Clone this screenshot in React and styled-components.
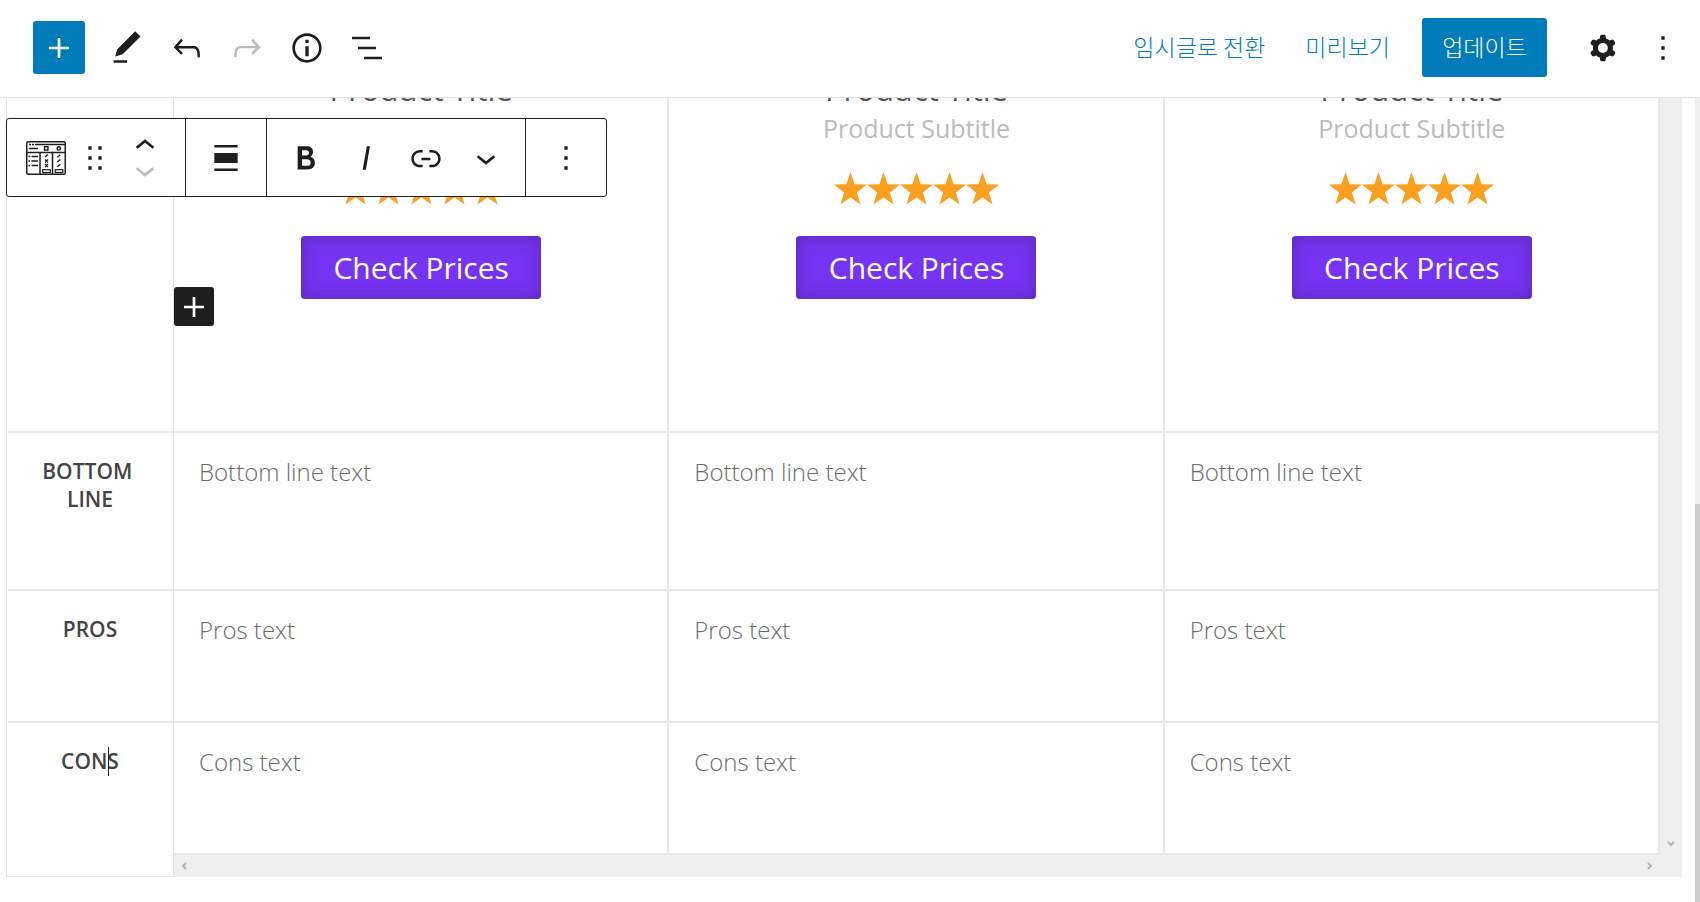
import React from "react";
import styled, { createGlobalStyle } from "styled-components";

const GlobalStyle = createGlobalStyle`
  *, *::before, *::after {
    box-sizing: border-box;
  }

  body {
    margin: 0;
    background: #fff;
    color: #1e1e1e;
    font-family: "Open Sans", "Noto Sans CJK KR", sans-serif;
  }

  button {
    font: inherit;
    color: inherit;
    border: 0;
    padding: 0;
    background: none;
    cursor: pointer;
  }

  svg {
    flex: none;
  }
`;

const Editor = styled.div`
  height: 100vh;
  display: flex;
  flex-direction: column;
  overflow: hidden;
`;

const Header = styled.header`
  flex: none;
  height: 98px;
  padding: 0 7px 2px 33px;
  display: flex;
  align-items: center;
  justify-content: space-between;
  background: #fff;
  border-bottom: 1px solid #e0e0e0;
`;

const HeaderGroup = styled.div`
  display: flex;
  align-items: center;
`;

const InserterButton = styled.button`
  width: 52px;
  height: 53px;
  margin-right: 12px;
  display: flex;
  align-items: center;
  justify-content: center;
  border-radius: 3px;
  background: #007cba;
  color: #fff;
`;

const IconButton = styled.button`
  width: ${(props) => props.$width || 60}px;
  height: 59px;
  display: flex;
  align-items: center;
  justify-content: center;

  &:disabled {
    color: #bbb;
    cursor: default;
  }
`;

const TextButton = styled.button`
  height: 59px;
  margin-right: 40px;
  padding-bottom: 3px;
  font-family: "Noto Sans CJK KR", sans-serif;
  font-size: 23px;
  font-weight: 300;
  color: #007cba;
`;

const UpdateButton = styled(TextButton)`
  width: 125px;
  margin: 0 26px 0 -8px;
  border-radius: 3px;
  background: #007cba;
  color: #fff;
`;

const Canvas = styled.main`
  position: relative;
  flex: 1;
  min-height: 0;
  display: flex;
  overflow: hidden;
`;

const Block = styled.div`
  flex: 1;
  min-width: 0;
  align-self: flex-start;
  display: flex;
  /* canvas is scrolled past the top of the block */
  margin: -40px 13px 0 6px;
`;

const BlockBody = styled.div`
  flex: 1;
  min-width: 0;
`;

const Table = styled.table`
  width: 100%;
  table-layout: fixed;
  border-collapse: separate;
  border-spacing: 0;
`;

const LabelCell = styled.th`
  width: 168px;
  height: ${(props) => props.$height}px;
  padding: 24px 30px 0;
  vertical-align: top;
  border: 1px solid #e2e2e2;
  border-width: 0 1px 0 1px;
  background: linear-gradient(#e8e8e8, #e8e8e8) right bottom / calc(100% - 1px) 2px no-repeat;
  font-size: 21px;
  line-height: 28px;
  font-weight: 600;
  text-transform: uppercase;
  white-space: break-spaces;
  color: #444;

  tr:last-child > & {
    background: none;
  }
`;

const TextCell = styled.td`
  padding: 22px 24px 0 25px;
  vertical-align: top;
  border-right: 2px solid #e8e8e8;
  border-bottom: 2px solid #e8e8e8;
  font-size: 24px;
  line-height: 33px;
  font-weight: 300;
  color: #6b6b6b;
`;

const ProductCell = styled.td`
  position: relative;
  padding: 12px 24px 0 25px;
  vertical-align: top;
  text-align: center;
  border-right: 2px solid #e8e8e8;
  border-bottom: 2px solid #e8e8e8;
`;

const ProductTitle = styled.h3`
  margin: 0 0 4px;
  font-size: 31px;
  line-height: 38px;
  font-weight: 500;
  color: #555;
`;

const ProductSubtitle = styled.p`
  margin: 0;
  font-size: 25px;
  line-height: 33px;
  font-weight: 400;
  color: #bbb;
`;

const Stars = styled.div`
  display: flex;
  justify-content: center;
  margin: 27px 0 31px;
  color: #f9a021;
`;

const PriceButton = styled.button`
  width: 240px;
  height: 63px;
  border-radius: 4px;
  background: #7633f1;
  box-shadow: inset 0 0 15px rgba(60, 30, 110, 0.5);
  color: #fff;
  font-size: 30px;
`;

const CellInserter = styled.button`
  position: absolute;
  left: 0;
  bottom: 105px;
  width: 40px;
  height: 39px;
  display: flex;
  align-items: center;
  justify-content: center;
  border-radius: 3px;
  background: #1e1e1e;
  color: #fff;
`;

const EditableLabel = styled.span`
  position: relative;
`;

const Caret = styled.span`
  position: absolute;
  top: 0;
  right: 10px;
  width: 1px;
  height: 29px;
  background: #1e1e1e;
`;

const BlockFooter = styled.div`
  display: flex;
  height: 22px;
`;

const FooterCorner = styled.div`
  flex: none;
  width: 168px;
  border: 1px solid #e2e2e2;
  border-top: 0;
`;

const HorizontalScroll = styled.div`
  flex: 1;
  display: flex;
  align-items: center;
  justify-content: space-between;
  padding: 0 5px;
  background: #efefef;
  color: #b0b0b0;
`;

const VerticalScroll = styled.div`
  flex: none;
  width: 22px;
  display: flex;
  align-items: flex-end;
  justify-content: center;
  padding-bottom: 28px;
  background: #efefef;
  color: #b0b0b0;
`;

const PageScroll = styled.div`
  flex: none;
  width: 5px;
  background: #efefef;
  display: flex;
  align-items: flex-end;
`;

const PageThumb = styled.div`
  width: 100%;
  height: 398px;
  background: #cdcdcd;
`;

const Toolbar = styled.div`
  position: absolute;
  left: 6px;
  top: 20px;
  height: 79px;
  display: flex;
  border: 1px solid #1e1e1e;
  border-radius: 3px;
  background: #fff;
`;

const ToolbarGroup = styled.div`
  display: flex;
  align-items: center;
  padding: 0 ${(props) => props.$pad || 0}px;

  & + & {
    border-left: 1px solid #1e1e1e;
  }
`;

const Movers = styled.div`
  display: flex;
  flex-direction: column;
  margin: 0 10px;
`;

const MoverButton = styled.button`
  width: 60px;
  height: 24px;
  display: flex;
  align-items: center;
  justify-content: center;
  overflow: hidden;

  &:disabled {
    color: #bbb;
  }
`;

const paths = {
  plus: "M18 11.2h-5.2V6h-1.6v5.2H6v1.6h5.2V18h1.6v-5.2H18z",
  edit: "M20.1 5.1L16.9 2 6.2 12.7l-1.3 4.4 4.5-1.3L20.1 5.1zM4 20.8h8v-1.5H4v1.5z",
  undo: "M18.3 11.7c-.6-.6-1.4-.9-2.3-.9H6.7l2.9-3.3-1.1-1-4.5 5L8.5 16l1-1-2.7-2.7H16c.5 0 .9.2 1.3.5 1 1 1 3.4 1 4.5v.3h1.5v-.2c0-1.5 0-4.3-1.5-5.7z",
  redo: "M15.6 6.5l-1.1 1 2.9 3.3H8c-.9 0-1.7.3-2.3.9-1.4 1.5-1.4 4.2-1.4 5.6v.2h1.5v-.3c0-1.1 0-3.5 1-4.5.3-.3.7-.5 1.3-.5h9.2L14.5 15l1.1 1.1 4.6-4.6-4.6-5z",
  info: "M12 3.2c-4.8 0-8.8 3.9-8.8 8.8 0 4.8 3.9 8.8 8.8 8.8 4.8 0 8.8-3.9 8.8-8.8 0-4.8-4-8.8-8.8-8.8zm0 16c-4 0-7.2-3.3-7.2-7.2C4.8 8 8 4.8 12 4.8s7.2 3.3 7.2 7.2c0 4-3.2 7.2-7.2 7.2zM11 17h2v-6h-2v6zm0-8h2V7h-2v2z",
  list: "M13.8 5.2H3v1.5h10.8V5.2zm-3.6 12v1.5H21v-1.5H10.2zm7.2-6H6.6v1.5h10.8v-1.5z",
  cog: "M10.289 4.836A1 1 0 0111.275 4h1.306a1 1 0 01.987.836l.244 1.466c.787.26 1.503.679 2.108 1.218l1.393-.522a1 1 0 011.216.437l.653 1.13a1 1 0 01-.23 1.273l-1.148.944a6.025 6.025 0 010 2.435l1.149.946a1 1 0 01.23 1.272l-.653 1.13a1 1 0 01-1.216.437l-1.394-.522c-.605.54-1.32.958-2.108 1.218l-.244 1.466a1 1 0 01-.987.836h-1.306a1 1 0 01-.986-.836l-.244-1.466a5.995 5.995 0 01-2.108-1.218l-1.394.522a1 1 0 01-1.217-.436l-.653-1.131a1 1 0 01.23-1.272l1.149-.946a6.026 6.026 0 010-2.435l-1.148-.944a1 1 0 01-.23-1.272l.653-1.131a1 1 0 011.217-.437l1.393.522a5.994 5.994 0 012.108-1.218l.244-1.466zM14.929 12a3 3 0 11-6 0 3 3 0 016 0z",
  more: "M13 19h-2v-2h2v2zm0-6h-2v-2h2v2zm0-6h-2V5h2v2z",
  drag: "M8 5h2v2H8zM14 5h2v2h-2zM8 11h2v2H8zM14 11h2v2h-2zM8 17h2v2H8zM14 17h2v2h-2z",
  up: "M6.5 12.4L12 8l5.5 4.4-.9 1.2L12 10l-4.5 3.6-1-1.2z",
  down: "M17.5 11.6L12 16l-5.5-4.4.9-1.2L12 14l4.5-3.6 1 1.2z",
  align: "M5 15h14V9H5v6zm0 4.8h14v-1.5H5v1.5zM5 4.2v1.5h14V4.2H5z",
  bold: "M14.7 11.3c1-.6 1.5-1.6 1.5-3 0-2.3-1.3-3.4-4-3.4H7v14h5.8c1.4 0 2.5-.3 3.3-1 .8-.7 1.2-1.7 1.2-2.9.1-1.9-.8-3.1-2.6-3.7zm-5.1-4h2.3c.6 0 1.1.1 1.4.4.3.3.5.7.5 1.2s-.2 1-.5 1.2c-.3.3-.8.4-1.4.4H9.6V7.3zm4.6 9c-.4.3-1 .4-1.7.4H9.6v-3.9h2.9c.7 0 1.3.2 1.7.5.4.3.6.8.6 1.5s-.2 1.2-.6 1.5z",
  italic: "M12.5 5L10 19h1.9l2.5-14z",
  link: "M15.6 7.2H14v1.5h1.6c2 0 3.7 1.7 3.7 3.7s-1.7 3.7-3.7 3.7H14v1.5h1.6c2.8 0 5.2-2.3 5.2-5.2 0-2.9-2.3-5.2-5.2-5.2zM4.7 12.4c0-2 1.7-3.7 3.7-3.7H10V7.2H8.4c-2.9 0-5.2 2.3-5.2 5.2 0 2.9 2.3 5.2 5.2 5.2H10v-1.5H8.4c-2 0-3.7-1.7-3.7-3.7zm4.6.9h5.3v-1.5H9.3v1.5z",
};

function Icon({ name }) {
  return (
    <svg width="40" height="40" viewBox="0 0 24 24" aria-hidden="true">
      <path d={paths[name]} fill="currentColor" fillRule="evenodd" />
    </svg>
  );
}

function TableIcon() {
  return (
    <svg width="40" height="34" viewBox="0 0 40 34" fill="none" stroke="#1e1e1e" aria-hidden="true">
      <rect x="0.75" y="0.75" width="38.5" height="32.5" rx="1.5" strokeWidth="1.5" />
      <path d="M11 3.5h28" strokeWidth="1.5" />
      <path d="M3 3.5h8" strokeWidth="1.5" strokeDasharray="2 1" />
      <path d="M1 11.5h38M14 11.5V33M26.5 11.5V33" strokeWidth="1.5" />
      <path d="M3 7.5h9M5.5 15.5H12M5.5 20H12M5.5 24.5H12" strokeWidth="1.3" />
      <path d="M2.5 15.5h1.5M2.5 20h1.5M2.5 24.5h1.5" strokeWidth="1.3" />
      <rect x="18.5" y="5.7" width="3.4" height="3.4" strokeWidth="1.4" />
      <circle cx="32.8" cy="7.4" r="1.7" strokeWidth="1.4" />
      <path
        d="M19 16l3-2.5M19 18.5l3 3M22 18.5l-3 3M19 23l3 3M22 23l-3 3M31.3 16.3l3-2.5M31.3 21l3-2.5M31.3 25.7l3-2.5"
        strokeWidth="1.4"
      />
      <rect x="16.7" y="28.7" width="7.6" height="2.8" strokeWidth="1.2" />
      <rect x="29.2" y="28.7" width="7.6" height="2.8" strokeWidth="1.2" />
    </svg>
  );
}

function Star() {
  return (
    <svg width="33" height="33" viewBox="0 0 33 33" aria-hidden="true">
      <path
        d="M16.5 0l4.1 12.3L33 12.6 22.9 20.4l3.7 12.2-10.1-7.1-10.1 7.1 3.7-12.2L0 12.6l12.4-.3z"
        fill="currentColor"
      />
    </svg>
  );
}

function Arrow({ d }) {
  return (
    <svg width="10" height="10" viewBox="0 0 10 10" fill="none" aria-hidden="true">
      <path d={d} stroke="currentColor" strokeWidth="2" />
    </svg>
  );
}

const products = [1, 2, 3];

const rows = [
  { label: "Bottom line", text: "Bottom line text", height: 158 },
  { label: "Pros", text: "Pros text", height: 132 },
  { label: "Cons", text: "Cons text", height: 132, editing: true },
];

function EditorHeader() {
  return (
    <Header>
      <HeaderGroup>
        <InserterButton aria-label="Add block">
          <Icon name="plus" />
        </InserterButton>
        <IconButton aria-label="Tools">
          <Icon name="edit" />
        </IconButton>
        <IconButton aria-label="Undo">
          <Icon name="undo" />
        </IconButton>
        <IconButton aria-label="Redo" disabled>
          <Icon name="redo" />
        </IconButton>
        <IconButton aria-label="Details">
          <Icon name="info" />
        </IconButton>
        <IconButton aria-label="Outline">
          <Icon name="list" />
        </IconButton>
      </HeaderGroup>
      <HeaderGroup>
        <TextButton>임시글로 전환</TextButton>
        <TextButton>미리보기</TextButton>
        <UpdateButton>업데이트</UpdateButton>
        <IconButton aria-label="Settings">
          <Icon name="cog" />
        </IconButton>
        <IconButton aria-label="Options">
          <Icon name="more" />
        </IconButton>
      </HeaderGroup>
    </Header>
  );
}

function BlockToolbar() {
  return (
    <Toolbar role="toolbar" aria-label="Block tools">
      <ToolbarGroup>
        <IconButton aria-label="Change block type" $width={78}>
          <TableIcon />
        </IconButton>
        <IconButton aria-label="Drag" $width={20}>
          <Icon name="drag" />
        </IconButton>
        <Movers>
          <MoverButton aria-label="Move up">
            <Icon name="up" />
          </MoverButton>
          <MoverButton aria-label="Move down" disabled>
            <Icon name="down" />
          </MoverButton>
        </Movers>
      </ToolbarGroup>
      <ToolbarGroup $pad={10}>
        <IconButton aria-label="Align">
          <Icon name="align" />
        </IconButton>
      </ToolbarGroup>
      <ToolbarGroup $pad={9}>
        <IconButton aria-label="Bold">
          <Icon name="bold" />
        </IconButton>
        <IconButton aria-label="Italic">
          <Icon name="italic" />
        </IconButton>
        <IconButton aria-label="Link">
          <Icon name="link" />
        </IconButton>
        <IconButton aria-label="More formatting">
          <Icon name="down" />
        </IconButton>
      </ToolbarGroup>
      <ToolbarGroup $pad={10}>
        <IconButton aria-label="More options">
          <Icon name="more" />
        </IconButton>
      </ToolbarGroup>
    </Toolbar>
  );
}

function ComparisonTable() {
  return (
    <Block>
      <BlockBody>
        <Table>
          <tbody>
            <tr>
              <LabelCell $height={375} />
              {products.map((id) => (
                <ProductCell key={id}>
                  <ProductTitle>Product Title</ProductTitle>
                  <ProductSubtitle>Product Subtitle</ProductSubtitle>
                  <Stars>
                    {[1, 2, 3, 4, 5].map((n) => (
                      <Star key={n} />
                    ))}
                  </Stars>
                  <PriceButton>Check Prices</PriceButton>
                  {id === 1 && (
                    <CellInserter aria-label="Add block">
                      <Icon name="plus" />
                    </CellInserter>
                  )}
                </ProductCell>
              ))}
            </tr>
            {rows.map((row) => (
              <tr key={row.label}>
                <LabelCell scope="row" $height={row.height}>
                  <EditableLabel>
                    {row.label}
                    {row.editing && <Caret />}
                  </EditableLabel>
                </LabelCell>
                {products.map((id) => (
                  <TextCell key={id}>{row.text}</TextCell>
                ))}
              </tr>
            ))}
          </tbody>
        </Table>
        <BlockFooter>
          <FooterCorner />
          <HorizontalScroll>
            <Arrow d="M7 2L4 5l3 3" />
            <Arrow d="M3 2l3 3-3 3" />
          </HorizontalScroll>
        </BlockFooter>
      </BlockBody>
      <VerticalScroll>
        <Arrow d="M2 3l3 3 3-3" />
      </VerticalScroll>
    </Block>
  );
}

export default function App() {
  return (
    <Editor>
      <GlobalStyle />
      <EditorHeader />
      <Canvas>
        <ComparisonTable />
        <PageScroll>
          <PageThumb />
        </PageScroll>
        <BlockToolbar />
      </Canvas>
    </Editor>
  );
}
